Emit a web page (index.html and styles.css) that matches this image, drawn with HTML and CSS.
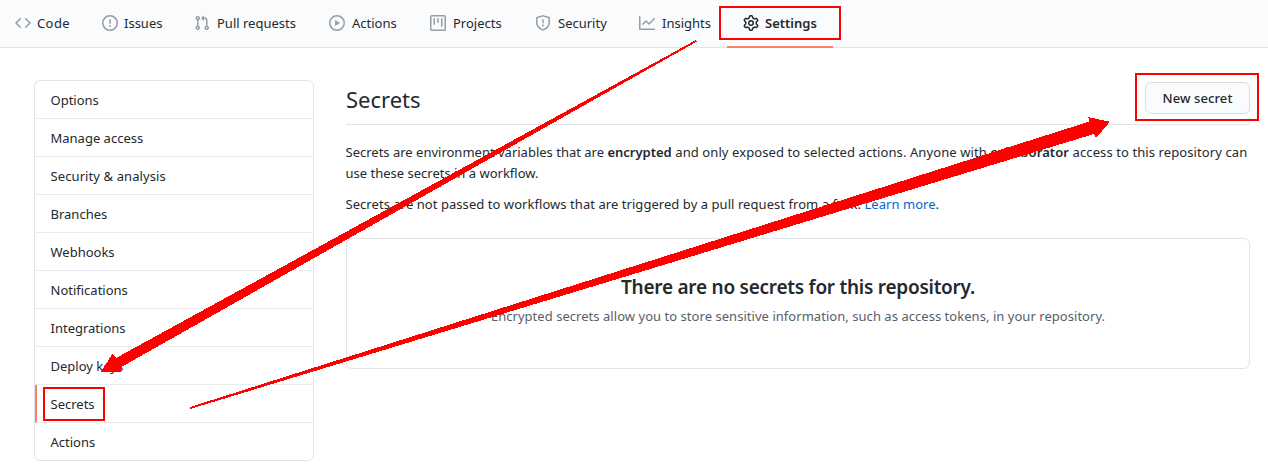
FILE: index.html
```html
<!DOCTYPE html>
<html lang="en">
<head>
<meta charset="utf-8">
<title>Secrets</title>
<link rel="stylesheet" href="styles.css">
</head>
<body>
<nav class="tabs">
  <a class="tab"><svg class="icon" viewBox="0 0 16 16"><path d="M4.72 3.22a.75.75 0 011.06 1.06L2.06 8l3.72 3.72a.75.75 0 11-1.06 1.06L.47 8.53a.75.75 0 010-1.06l4.25-4.25zm6.56 0a.75.75 0 10-1.06 1.06L13.94 8l-3.72 3.72a.75.75 0 101.06 1.06l4.25-4.25a.75.75 0 000-1.06l-4.25-4.25z"/></svg><span class="code-label">Code</span></a>
  <a class="tab"><svg class="icon" viewBox="0 0 16 16"><path fill-rule="evenodd" d="M8 1.5a6.5 6.5 0 100 13 6.5 6.5 0 000-13zM0 8a8 8 0 1116 0A8 8 0 010 8zm9 3a1 1 0 11-2 0 1 1 0 012 0zm-.25-6.25a.75.75 0 00-1.5 0v3.5a.75.75 0 001.5 0v-3.5z"/></svg><span class="issues-label">Issues</span></a>
  <a class="tab"><svg class="icon" viewBox="0 0 16 16"><path fill-rule="evenodd" d="M7.177 3.073L9.573.677A.25.25 0 0110 .854v4.792a.25.25 0 01-.427.177L7.177 3.427a.25.25 0 010-.354zM3.75 2.5a.75.75 0 100 1.5.75.75 0 000-1.5zm-2.25.75a2.25 2.25 0 113 2.122v5.256a2.251 2.251 0 11-1.5 0V5.372A2.25 2.25 0 011.5 3.25zM11 2.5h-1V4h1a1 1 0 011 1v5.628a2.251 2.251 0 101.5 0V5A2.5 2.5 0 0011 2.5zm1 10.25a.75.75 0 111.5 0 .75.75 0 01-1.5 0zM3.75 12a.75.75 0 100 1.5.75.75 0 000-1.5z"/></svg><span>Pull requests</span></a>
  <a class="tab"><svg class="icon" viewBox="0 0 16 16"><path fill-rule="evenodd" d="M1.5 8a6.5 6.5 0 1113 0 6.5 6.5 0 01-13 0zM8 0a8 8 0 100 16A8 8 0 008 0zM6.379 5.227A.25.25 0 006 5.442v5.117a.25.25 0 00.379.214l4.264-2.559a.25.25 0 000-.428L6.379 5.227z"/></svg><span>Actions</span></a>
  <a class="tab"><svg class="icon" viewBox="0 0 16 16"><path fill-rule="evenodd" d="M1.75 0A1.75 1.75 0 000 1.75v12.5C0 15.216.784 16 1.75 16h12.5A1.75 1.75 0 0016 14.25V1.75A1.75 1.75 0 0014.25 0H1.75zM1.5 1.75a.25.25 0 01.25-.25h12.5a.25.25 0 01.25.25v12.5a.25.25 0 01-.25.25H1.75a.25.25 0 01-.25-.25V1.75zM11.75 3a.75.75 0 00-.75.75v7.5a.75.75 0 001.5 0v-7.5a.75.75 0 00-.75-.75zm-8.25.75a.75.75 0 011.5 0v5.5a.75.75 0 01-1.5 0v-5.5zM8 3a.75.75 0 00-.75.75v3.5a.75.75 0 001.5 0v-3.5A.75.75 0 008 3z"/></svg><span>Projects</span></a>
  <a class="tab"><svg class="icon" viewBox="0 0 16 16"><path fill-rule="evenodd" d="M7.467.133a1.75 1.75 0 011.066 0l5.25 1.68A1.75 1.75 0 0115 3.48V7c0 1.566-.32 3.182-1.303 4.682-.983 1.498-2.585 2.813-5.032 3.855a1.7 1.7 0 01-1.33 0c-2.447-1.042-4.049-2.357-5.032-3.855C1.32 10.182 1 8.566 1 7V3.48a1.75 1.75 0 011.217-1.667l5.25-1.68zm.61 1.429a.25.25 0 00-.153 0l-5.25 1.68a.25.25 0 00-.174.238V7c0 1.358.275 2.666 1.057 3.86.784 1.194 2.121 2.34 4.366 3.297a.2.2 0 00.154 0c2.245-.956 3.582-2.104 4.366-3.298C13.225 9.666 13.5 8.36 13.5 7V3.48a.25.25 0 00-.174-.237l-5.25-1.68zM9 10.5a1 1 0 11-2 0 1 1 0 012 0zm-.25-5.75a.75.75 0 00-1.5 0v3a.75.75 0 001.5 0v-3z"/></svg><span>Security</span></a>
  <a class="tab"><svg class="icon" viewBox="0 0 16 16"><path fill-rule="evenodd" d="M1.5 1.75a.75.75 0 00-1.5 0v12.5c0 .414.336.75.75.75h14.5a.75.75 0 000-1.5H1.5V1.75zm14.28 2.53a.75.75 0 00-1.06-1.06L10 7.94 7.53 5.47a.75.75 0 00-1.06 0L3.22 8.72a.75.75 0 001.06 1.06L7 7.06l2.47 2.47a.75.75 0 001.06 0l5.25-5.25z"/></svg><span>Insights</span></a>
  <a class="tab tab-active"><svg class="icon" viewBox="0 0 16 16"><path fill-rule="evenodd" d="M7.429 1.525a6.593 6.593 0 011.142 0c.036.003.108.036.137.146l.289 1.105c.147.56.55.967.997 1.189.174.086.341.183.501.29.417.278.97.423 1.53.27l1.102-.303c.11-.03.175.016.195.046.219.31.41.641.573.989.014.031.022.11-.059.19l-.815.806c-.411.406-.562.957-.53 1.456a4.588 4.588 0 010 .582c-.032.499.119 1.05.53 1.456l.815.806c.08.08.073.159.059.19a6.494 6.494 0 01-.573.99c-.02.029-.086.074-.195.045l-1.103-.303c-.559-.153-1.112-.008-1.529.27-.16.107-.327.204-.5.29-.449.222-.851.628-.998 1.189l-.289 1.105c-.029.11-.101.143-.137.146a6.613 6.613 0 01-1.142 0c-.036-.003-.108-.037-.137-.146l-.289-1.105c-.147-.56-.55-.967-.997-1.189a4.502 4.502 0 01-.501-.29c-.417-.278-.97-.423-1.53-.27l-1.102.303c-.11.03-.175-.016-.195-.046a6.492 6.492 0 01-.573-.989c-.014-.031-.022-.11.059-.19l.815-.806c.411-.406.562-.957.53-1.456a4.587 4.587 0 010-.582c.032-.499-.119-1.05-.53-1.456l-.815-.806c-.08-.08-.073-.159-.059-.19a6.44 6.44 0 01.573-.99c.02-.029.086-.075.195-.045l1.103.303c.559.153 1.112.008 1.529-.27.16-.107.327-.204.5-.29.449-.222.851-.628.998-1.189l.289-1.105c.029-.11.101-.143.137-.146zM8 0c-.236 0-.47.01-.701.03-.743.065-1.29.615-1.458 1.261l-.29 1.106c-.017.066-.078.158-.211.224a5.994 5.994 0 00-.668.386c-.123.082-.233.09-.3.071L3.27 2.776c-.644-.177-1.392.02-1.82.63a7.977 7.977 0 00-.704 1.217c-.315.675-.111 1.422.363 1.891l.815.806c.05.048.098.147.088.294a6.084 6.084 0 000 .772c.01.147-.038.246-.088.294l-.815.806c-.474.469-.678 1.216-.363 1.891.2.428.436.835.704 1.218.428.609 1.176.806 1.82.63l1.103-.303c.066-.019.176-.011.299.071.213.143.436.272.668.386.133.066.194.158.212.224l.289 1.106c.169.646.715 1.196 1.458 1.26a8.094 8.094 0 001.402 0c.743-.064 1.29-.614 1.458-1.26l.29-1.106c.017-.066.078-.158.211-.224a5.98 5.98 0 00.668-.386c.123-.082.233-.09.3-.071l1.102.302c.644.177 1.392-.02 1.82-.63.268-.382.505-.789.704-1.217.315-.675.111-1.422-.364-1.891l-.814-.806c-.05-.048-.098-.147-.088-.294a6.1 6.1 0 000-.772c-.01-.147.039-.246.088-.294l.814-.806c.475-.469.679-1.216.364-1.891a7.992 7.992 0 00-.704-1.218c-.428-.609-1.176-.806-1.82-.63l-1.103.303c-.066.019-.176.011-.299-.071a5.991 5.991 0 00-.668-.386c-.133-.066-.194-.158-.212-.224L10.16 1.29C9.99.645 9.444.095 8.701.031A8.094 8.094 0 008 0zm1.5 8a1.5 1.5 0 11-3 0 1.5 1.5 0 013 0zM11 8a3 3 0 11-6 0 3 3 0 016 0z"/></svg><span>Settings</span></a>
</nav>
<main class="page">
  <aside class="menu">
    <a class="menu-item">Options</a>
    <a class="menu-item">Manage access</a>
    <a class="menu-item menu-wide">Security &amp; analysis</a>
    <a class="menu-item">Branches</a>
    <a class="menu-item">Webhooks</a>
    <a class="menu-item">Notifications</a>
    <a class="menu-item">Integrations</a>
    <a class="menu-item">Deploy keys</a>
    <a class="menu-item menu-selected">Secrets</a>
    <a class="menu-item">Actions</a>
  </aside>
  <section class="content">
    <header class="subhead">
      <h2 class="title">Secrets</h2>
      <button class="btn">New secret</button>
    </header>
    <p class="text">Secrets are environment variables that are <strong>encrypted</strong><span class="text-loose"> and only exposed to selected actions. Anyone with <strong>collaborator</strong> access to this repository can</span><br>use these secrets in a workflow.</p>
    <p class="text text-note">Secrets are not passed to workflows that are triggered by a pull request from a fork. <a class="link">Learn more</a>.</p>
    <div class="blank">
      <h3 class="blank-title">There are no secrets for this repository.</h3>
      <p class="blank-text">Encrypted secrets allow you to store sensitive information, such as access tokens, in your repository.</p>
    </div>
  </section>
</main>
<svg class="marks" viewBox="0 0 1268 469" shape-rendering="crispEdges">
  <g fill="none" stroke="#f00" stroke-width="2">
    <rect x="720" y="7" width="120" height="32"/>
    <rect x="44" y="388" width="60" height="32"/>
    <rect x="1136" y="74" width="122" height="46"/>
  </g>
  <g fill="#f00">
    <path d="M696 40L116 358L112.3 354L101 371.8H121L120.5 367.5L697 41.5Z"/>
    <path d="M190 407L1089.5 121.5L1088.3 117.2L1110 121.7L1096 138L1094 134L190 409Z"/>
  </g>
</svg>
</body>
</html>
```
FILE: styles.css
```css
* { box-sizing: border-box; }
body {
  margin: 0;
  width: 1268px;
  height: 469px;
  overflow: hidden;
  position: relative;
  background: #fff;
  color: #24292e;
  font: 13px/21px "Noto Sans", "Open Sans", sans-serif;
}
h2, h3, p { margin: 0; }
.tabs {
  display: grid;
  grid-template-columns: 87px 92px 135px 101px 105px 104px 88px 106px;
  height: 48px;
  padding-left: 15px;
  background: #fafbfc;
  border-bottom: 1px solid #e1e4e8;
}
.tab {
  display: flex;
  align-items: center;
  gap: 7px;
  height: 48px;
  padding-bottom: 2px;
  white-space: nowrap;
}
.code-label { margin-left: -1px; letter-spacing: 0.4px; }
.issues-label { margin-left: -1px; }
.icon { flex: none; width: 16px; height: 16px; fill: #959da5; }
.tab-active {
  gap: 6px;
  padding: 0 0 0 16px;
  border-bottom: 2px solid #f9826c;
  font-weight: 600;
}
.tab-active .icon { fill: #24292e; }
.page { display: flex; gap: 32px; padding: 32px 18px 0 34px; }
.menu {
  flex: none;
  width: 280px;
  height: 381px;
  border: 1px solid #e1e4e8;
  border-radius: 6px;
  overflow: hidden;
}
.menu-item {
  display: block;
  height: 38px;
  padding: 9px 15.5px 7px;
  border-bottom: 1px solid #eaecef;
}
.menu-item:last-child { border-bottom: 0; }
.menu-wide { letter-spacing: 0.1px; }
.menu-selected { padding-left: 13.5px; border-left: 2px solid #f9826c; }
.content { flex: 1; min-width: 0; }
.subhead {
  display: flex;
  justify-content: space-between;
  height: 45px;
  margin-bottom: 17px;
  border-bottom: 1px solid #e1e4e8;
}
.title { font-size: 22px; line-height: 38px; font-weight: 400; }
.btn {
  width: 105px;
  height: 32px;
  margin-top: 2px;
  padding: 0;
  border: 1px solid #dcdee0;
  border-radius: 6px;
  background: #fafbfc;
  color: #24292e;
  font: 500 13px/20px "Noto Sans", "Open Sans", sans-serif;
  letter-spacing: 0.1px;
}
.text { margin: 0 0 10px -0.5px; white-space: nowrap; }
.text strong { font-weight: 600; }
.text-loose { letter-spacing: 0.095px; }
.text-note { letter-spacing: 0.055px; }
.link { color: #0366d6; }
.blank {
  height: 131px;
  margin-top: 23px;
  padding-top: 33px;
  border: 1px solid #e1e4e8;
  border-radius: 6px;
  text-align: center;
}
.blank-title {
  font-size: 19px;
  line-height: 30px;
  font-weight: 600;
  letter-spacing: -0.25px;
}
.blank-text { margin-top: 4px; color: #586069; letter-spacing: 0.04px; }
.marks { position: absolute; left: 0; top: 0; width: 1268px; height: 469px; }
```
